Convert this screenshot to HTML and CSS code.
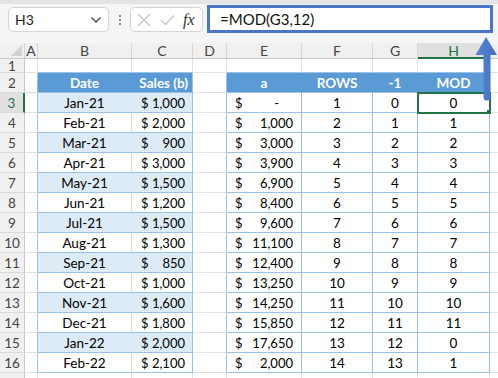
FILE: index.html
```html
<!DOCTYPE html>
<html lang="en">
<head>
  <meta charset="UTF-8" />
  <title>MOD formula</title>
  <link rel="stylesheet" href="styles.css">
</head>
<body>
  <div class="app">
    <div class="fbar">
      <div class="namebox">
        <span>H3</span>
        <svg width="12" height="8" viewBox="0 0 12 8"><path d="M1.5 1.5 L6 6 L10.5 1.5" fill="none" stroke="#444" stroke-width="1.3"/></svg>
      </div>
      <div class="sep"><i></i><i></i><i></i></div>
      <div class="fxbox">
        <svg width="14" height="14" viewBox="0 0 14 14"><path d="M1 1 L13 13 M13 1 L1 13" stroke="#c4c4c4" stroke-width="1.2"/></svg>
        <svg width="15" height="12" viewBox="0 0 15 12"><path d="M1 6 L5.5 10.5 L14 1.5" fill="none" stroke="#c4c4c4" stroke-width="1.2"/></svg>
        <span class="fx">fx</span>
      </div>
      <div class="formula">=MOD(G3,12)</div>
    </div>

    <table class="sheet">
      <colgroup>
        <col class="w-rh"><col class="w-a"><col class="w-b"><col class="w-c"><col class="w-d">
        <col class="w-e"><col class="w-f"><col class="w-g"><col class="w-h"><col class="w-i">
      </colgroup>
      <tr class="hdr">
        <td class="corner"><span class="tri"></span></td>
        <td class="ch">A</td><td class="ch">B</td><td class="ch">C</td><td class="ch">D</td>
        <td class="ch">E</td><td class="ch">F</td><td class="ch">G</td><td class="ch ch-sel">H</td><td class="ch"></td>
      </tr>
      <tr class="r1">
        <td class="rh">1</td><td></td><td class="top"></td><td class="top"></td><td></td>
        <td class="top"></td><td class="top"></td><td class="top"></td><td class="top"></td><td></td>
      </tr>
      <tr>
        <td class="rh">2</td><td class="edge"></td>
        <td class="th">Date</td><td class="th th-r lastb">Sales (b)</td><td class="edge"></td>
        <td class="th">a</td><td class="th">ROWS</td><td class="th">-1</td><td class="th lastb">MOD</td><td></td>
      </tr>
      <tr>
        <td class="rh rh-sel">3</td><td class="edge"></td>
        <td class="t1 band">Jan-21</td><td class="t1c band"><div class="acc"><span>$</span><span>1,000</span></div></td><td class="edge"></td>
        <td class="t2"><div class="acc acc-e"><span>$</span><span class="dash">-</span></div></td><td class="t2">1</td><td class="t2">0</td><td class="t2 sel">0<span class="handle"></span></td><td></td>
      </tr>
      <tr>
        <td class="rh">4</td><td class="edge"></td>
        <td class="t1">Feb-21</td><td class="t1c"><div class="acc"><span>$</span><span>2,000</span></div></td><td class="edge"></td>
        <td class="t2"><div class="acc acc-e"><span>$</span><span>1,000</span></div></td><td class="t2">2</td><td class="t2">1</td><td class="t2">1</td><td></td>
      </tr>
      <tr>
        <td class="rh">5</td><td class="edge"></td>
        <td class="t1 band">Mar-21</td><td class="t1c band"><div class="acc"><span>$</span><span>900</span></div></td><td class="edge"></td>
        <td class="t2"><div class="acc acc-e"><span>$</span><span>3,000</span></div></td><td class="t2">3</td><td class="t2">2</td><td class="t2">2</td><td></td>
      </tr>
      <tr>
        <td class="rh">6</td><td class="edge"></td>
        <td class="t1">Apr-21</td><td class="t1c"><div class="acc"><span>$</span><span>3,000</span></div></td><td class="edge"></td>
        <td class="t2"><div class="acc acc-e"><span>$</span><span>3,900</span></div></td><td class="t2">4</td><td class="t2">3</td><td class="t2">3</td><td></td>
      </tr>
      <tr>
        <td class="rh">7</td><td class="edge"></td>
        <td class="t1 band">May-21</td><td class="t1c band"><div class="acc"><span>$</span><span>1,500</span></div></td><td class="edge"></td>
        <td class="t2"><div class="acc acc-e"><span>$</span><span>6,900</span></div></td><td class="t2">5</td><td class="t2">4</td><td class="t2">4</td><td></td>
      </tr>
      <tr>
        <td class="rh">8</td><td class="edge"></td>
        <td class="t1">Jun-21</td><td class="t1c"><div class="acc"><span>$</span><span>1,200</span></div></td><td class="edge"></td>
        <td class="t2"><div class="acc acc-e"><span>$</span><span>8,400</span></div></td><td class="t2">6</td><td class="t2">5</td><td class="t2">5</td><td></td>
      </tr>
      <tr>
        <td class="rh">9</td><td class="edge"></td>
        <td class="t1 band">Jul-21</td><td class="t1c band"><div class="acc"><span>$</span><span>1,500</span></div></td><td class="edge"></td>
        <td class="t2"><div class="acc acc-e"><span>$</span><span>9,600</span></div></td><td class="t2">7</td><td class="t2">6</td><td class="t2">6</td><td></td>
      </tr>
      <tr>
        <td class="rh">10</td><td class="edge"></td>
        <td class="t1">Aug-21</td><td class="t1c"><div class="acc"><span>$</span><span>1,300</span></div></td><td class="edge"></td>
        <td class="t2"><div class="acc acc-e"><span>$</span><span>11,100</span></div></td><td class="t2">8</td><td class="t2">7</td><td class="t2">7</td><td></td>
      </tr>
      <tr>
        <td class="rh">11</td><td class="edge"></td>
        <td class="t1 band">Sep-21</td><td class="t1c band"><div class="acc"><span>$</span><span>850</span></div></td><td class="edge"></td>
        <td class="t2"><div class="acc acc-e"><span>$</span><span>12,400</span></div></td><td class="t2">9</td><td class="t2">8</td><td class="t2">8</td><td></td>
      </tr>
      <tr>
        <td class="rh">12</td><td class="edge"></td>
        <td class="t1">Oct-21</td><td class="t1c"><div class="acc"><span>$</span><span>1,000</span></div></td><td class="edge"></td>
        <td class="t2"><div class="acc acc-e"><span>$</span><span>13,250</span></div></td><td class="t2">10</td><td class="t2">9</td><td class="t2">9</td><td></td>
      </tr>
      <tr>
        <td class="rh">13</td><td class="edge"></td>
        <td class="t1 band">Nov-21</td><td class="t1c band"><div class="acc"><span>$</span><span>1,600</span></div></td><td class="edge"></td>
        <td class="t2"><div class="acc acc-e"><span>$</span><span>14,250</span></div></td><td class="t2">11</td><td class="t2">10</td><td class="t2">10</td><td></td>
      </tr>
      <tr>
        <td class="rh">14</td><td class="edge"></td>
        <td class="t1">Dec-21</td><td class="t1c"><div class="acc"><span>$</span><span>1,800</span></div></td><td class="edge"></td>
        <td class="t2"><div class="acc acc-e"><span>$</span><span>15,850</span></div></td><td class="t2">12</td><td class="t2">11</td><td class="t2">11</td><td></td>
      </tr>
      <tr>
        <td class="rh">15</td><td class="edge"></td>
        <td class="t1 band">Jan-22</td><td class="t1c band"><div class="acc"><span>$</span><span>2,000</span></div></td><td class="edge"></td>
        <td class="t2"><div class="acc acc-e"><span>$</span><span>17,650</span></div></td><td class="t2">13</td><td class="t2">12</td><td class="t2">0</td><td></td>
      </tr>
      <tr>
        <td class="rh">16</td><td class="edge"></td>
        <td class="t1">Feb-22</td><td class="t1c"><div class="acc"><span>$</span><span>2,100</span></div></td><td class="edge"></td>
        <td class="t2"><div class="acc acc-e"><span>$</span><span>2,000</span></div></td><td class="t2">14</td><td class="t2">13</td><td class="t2">1</td><td></td>
      </tr>
      <tr>
        <td class="rh"></td><td></td><td></td><td></td><td></td><td></td><td></td><td></td><td></td><td></td>
      </tr>
    </table>

    <svg class="arrow" width="24" height="70" viewBox="0 0 24 70">
      <defs>
        <linearGradient id="ag" x1="0" x2="1" y1="0" y2="0">
          <stop offset="0" stop-color="#5b88d4"/>
          <stop offset="1" stop-color="#3f6fc0"/>
        </linearGradient>
      </defs>
      <path d="M12 3 L23 21 L16.5 21 L16.5 63 Q16.5 66.5 13 66.5 L12 66.5 Q9.5 66.5 9.5 63 L9.5 21 L1.5 21 Z" fill="url(#ag)"/>
    </svg>
  </div>
</body>
</html>
```

FILE: styles.css
```css
html, body {
  margin: 0;
  padding: 0;
  background: #fff;
}
body {
  width: 498px;
  height: 378px;
  overflow: hidden;
  font-family: Lato, "Liberation Sans", Arial, sans-serif;
  color: #000;
}
.app {
  position: relative;
  width: 498px;
  height: 378px;
  overflow: hidden;
}

/* formula bar */
.fbar {
  display: flex;
  align-items: flex-start;
  height: 43px;
  box-sizing: border-box;
  border-top: 4px solid #e4e4e4;
  background: #f5f5f5;
  padding-left: 8px;
}
.namebox {
  display: flex;
  align-items: center;
  justify-content: space-between;
  box-sizing: border-box;
  width: 101px;
  height: 25px;
  margin-top: 3px;
  padding: 0 6px 0 6px;
  background: #fff;
  border: 1px solid #d5d5d5;
  border-radius: 5px;
  font-size: 14px;
  color: #222;
}
.sep {
  display: flex;
  flex-direction: column;
  gap: 2px;
  margin: 11px 0 0 10px;
  width: 10px;
}
.sep i {
  display: block;
  width: 2px;
  height: 2px;
  background: #8a8a8a;
}
.fxbox {
  display: flex;
  align-items: center;
  gap: 9px;
  box-sizing: border-box;
  width: 73px;
  height: 25px;
  margin: 3px 0 0 1px;
  padding-left: 6px;
  background: #fff;
  border: 1px solid #d5d5d5;
  border-radius: 5px;
}
.fx {
  font-family: "Liberation Serif", "DejaVu Serif", serif;
  font-style: italic;
  font-size: 16px;
  color: #333;
  margin-left: -1px;
}
.formula {
  box-sizing: border-box;
  width: 286px;
  height: 28px;
  margin: 1px 0 0 4px;
  padding-left: 10px;
  line-height: 22px;
  background: #fff;
  border: 3px solid #4a76c6;
  font-size: 15px;
  color: #111;
}

/* grid */
.sheet {
  table-layout: fixed;
  border-collapse: separate;
  border-spacing: 0;
  width: 528px;
  font-size: 13.5px;
  line-height: 16px;
}
.w-rh { width: 25px; }
.w-a { width: 13px; }
.w-b { width: 94px; }
.w-c { width: 61px; }
.w-d { width: 34px; }
.w-e { width: 75px; }
.w-f { width: 71px; }
.w-g { width: 45px; }
.w-h { width: 72px; }
.w-i { width: 38px; }

.sheet td {
  box-sizing: border-box;
  height: 20px;
  padding: 0;
  border-right: 1px solid #e1e1e1;
  border-bottom: 1px solid #e1e1e1;
  text-align: center;
  white-space: nowrap;
  overflow: hidden;
}
.sheet tr.hdr td {
  height: 16px;
  background: #f0f0f0;
  border-right: 1px solid #d6d6d6;
  border-bottom: 1px solid #c9c9c9;
  color: #444;
  font-size: 14px;
  line-height: 14px;
}
.sheet tr.r1 td {
  height: 14px;
  line-height: 12px;
}
.corner {
  position: relative;
}
.tri {
  position: absolute;
  right: 2px;
  bottom: 2px;
  width: 0;
  height: 0;
  border-left: 11px solid transparent;
  border-bottom: 11px solid #d2d2d2;
}
.sheet tr.hdr td.ch-sel {
  background: #e0e0e0;
  color: #217346;
  border-bottom: 2px solid #217346;
  line-height: 13px;
  overflow: visible;
}
.sheet td.rh {
  background: #f0f0f0;
  color: #444;
  border-right: 1px solid #c9c9c9;
  border-bottom: 1px solid #dadada;
}
.sheet td.rh-sel {
  background: #e0e0e0;
  color: #217346;
  border-right: 2px solid #217346;
}

/* tables */
.sheet td.edge {
  border-right-color: #9bc2e6;
}
.sheet td.top {
  border-bottom-color: #9bc2e6;
}
.sheet td.th {
  background: #5b9bd5;
  color: #fff;
  font-weight: bold;
  border-right-color: #5b9bd5;
  border-bottom-color: #9bc2e6;
}
.sheet td.th-r {
  text-align: right;
  padding-right: 4px;
}
.sheet td.lastb {
  border-right-color: #9bc2e6;
}
.sheet td.t1 {
  border-right-color: #dcdcdc;
  border-bottom-color: #9bc2e6;
}
.sheet td.t1c {
  border-right-color: #9bc2e6;
  border-bottom-color: #9bc2e6;
}
.sheet td.band {
  background: #ddebf7;
}
.sheet td.t1.band {
  border-right-color: #ddebf7;
}
.sheet td.t2 {
  border-right-color: #9bc2e6;
  border-bottom-color: #9bc2e6;
}
.acc {
  display: flex;
  justify-content: space-between;
  padding: 0 7px 0 9px;
  font-size: 13px;
}
.acc-e {
  padding: 0 8px 0 8px;
}
.dash {
  padding-right: 14px;
}
.sheet td.sel {
  position: relative;
  outline: 2px solid #217346;
  outline-offset: -1px;
}
.handle {
  position: absolute;
  right: -4px;
  bottom: -4px;
  width: 5px;
  height: 5px;
  background: #217346;
  border: 1px solid #fff;
}

.arrow {
  position: absolute;
  left: 474px;
  top: 34px;
}
```
